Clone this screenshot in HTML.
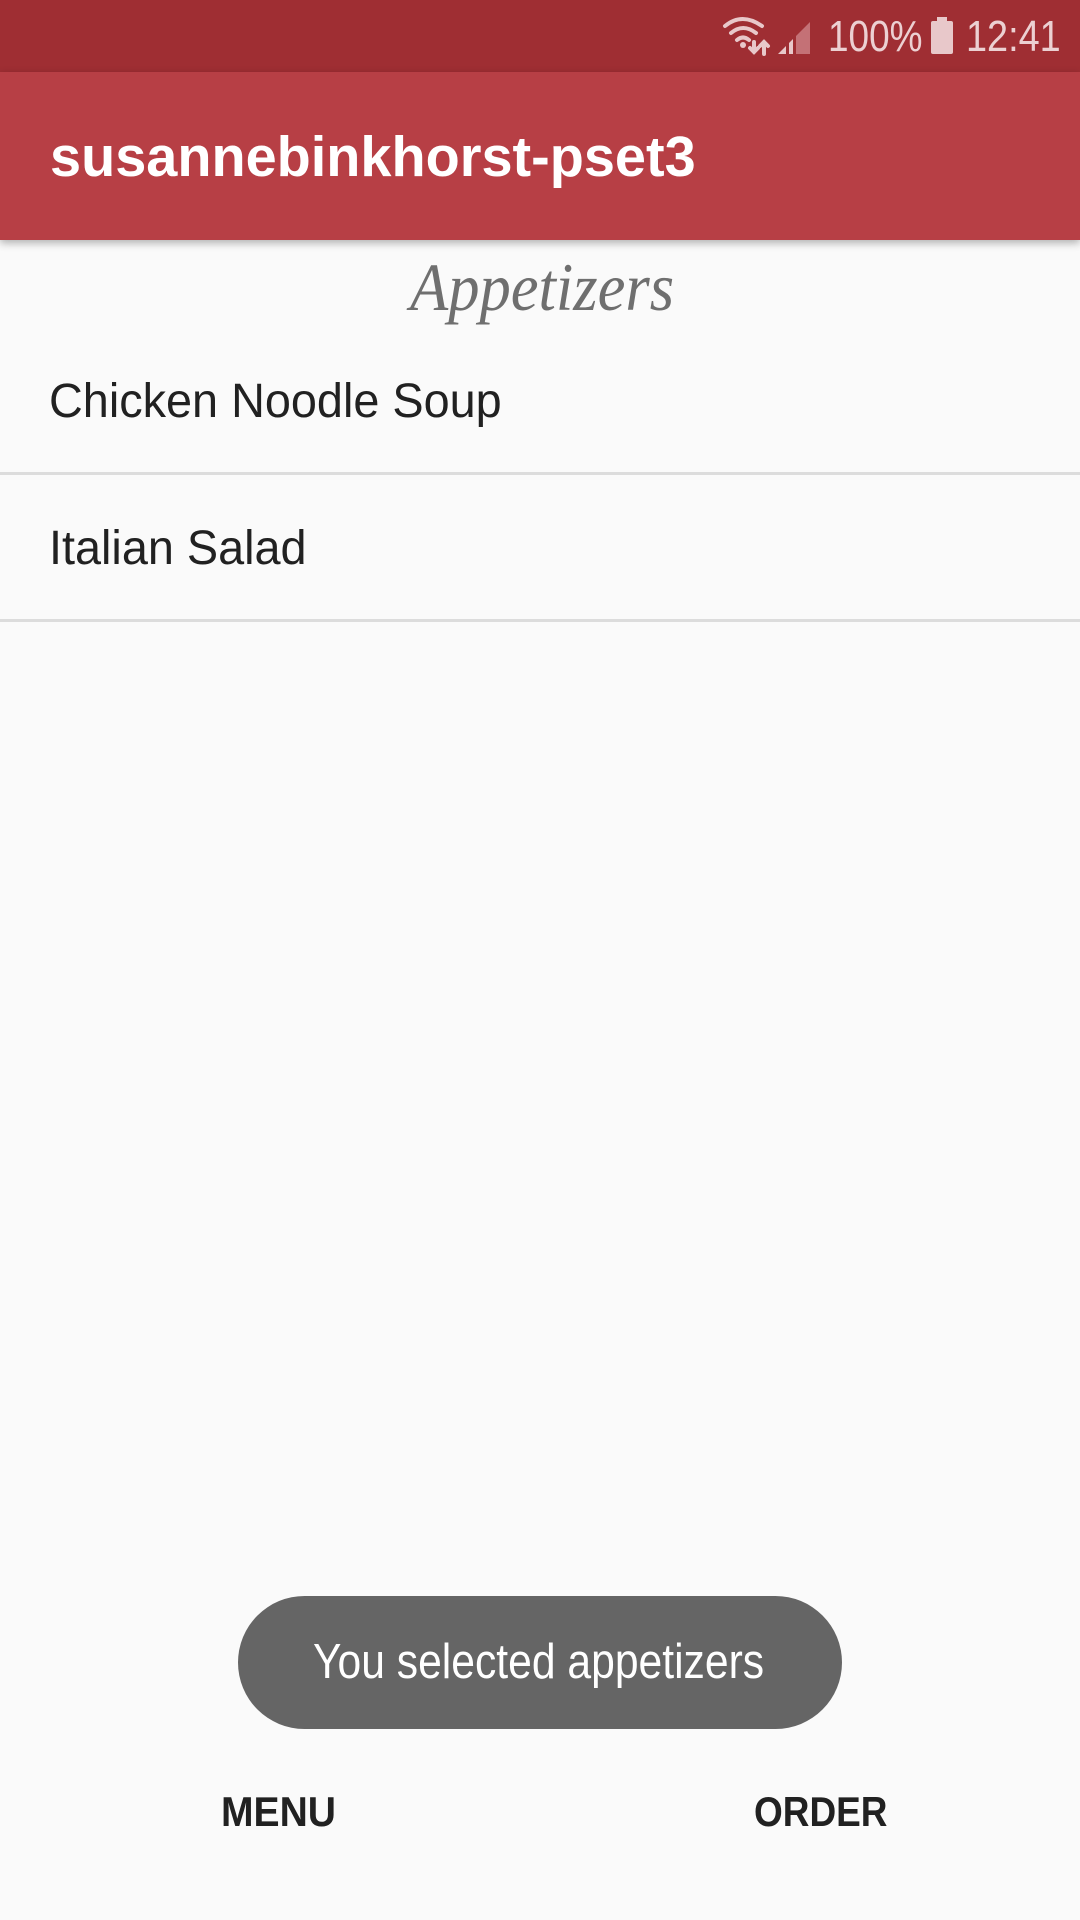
<!DOCTYPE html>
<html><head><meta charset="utf-8"><style>
*{margin:0;padding:0;box-sizing:border-box}
body{width:1080px;height:1920px;background:#fafafa;position:relative;overflow:hidden;font-family:"Liberation Sans",sans-serif}
.sb{position:absolute;left:0;top:0;width:1080px;height:72px;background:#9f2e33}
.ab{position:absolute;left:0;top:72px;width:1080px;height:168px;background:#b73f45;box-shadow:0 3px 8px rgba(0,0,0,.3)}
.t{position:absolute;white-space:nowrap;transform-origin:0 0}
.div{position:absolute;left:0;width:1080px;height:3px;background:#dcdcdc}
</style></head><body>
<div class="sb">
<svg style="position:absolute;left:722px;top:16px" width="90" height="40" viewBox="0 0 90 40">
<g fill="none" stroke="#e8c8ca" stroke-width="4" stroke-linecap="round">
<path d="M3 10 Q20 -4 40 10"/><path d="M9 17 Q21 7 34 17"/><path d="M15 24 Q21 19 27 24"/>
<path d="M32 26 v10 M28 32 l4 4 4-4"/><path d="M42 38 v-12 M38 30 l4-4 4 4"/></g>
<circle cx="21" cy="29" r="3" fill="#e8c8ca"/>
<path d="M56 38 L64 38 L64 30 Z" fill="#e8c8ca"/><path d="M67 38 L67 27 L71 23 L71 38 Z" fill="#e8c8ca"/>
<path d="M74 38 L74 20 L88 6 L88 38 Z" fill="#c47176"/>
</svg>
<div class="t" style="left:828px;top:12px;font-size:44px;color:#ecd0d2;transform:scaleX(0.84)">100%</div>
<div style="position:absolute;left:931px;top:21px;width:22px;height:33px;background:#e8c8ca;border-radius:2px"></div>
<div style="position:absolute;left:937px;top:17px;width:10px;height:5px;background:#e8c8ca"></div>
<div class="t" style="left:966px;top:12px;font-size:44px;color:#ecd0d2;transform:scaleX(0.86)">12:41</div>
</div>
<div class="ab"><div class="t" style="left:50px;top:52px;font-size:57px;color:#fff;font-weight:bold;transform:scaleX(0.98)">susannebinkhorst-pset3</div></div>
<div class="t" style="left:410px;top:248px;font-size:68px;color:#6f6f6f;font-family:'Liberation Serif',serif;font-style:italic;transform:scaleX(0.92)">Appetizers</div>
<div class="t" style="left:49px;top:374px;font-size:48px;color:#212121;transform:scaleX(0.975)">Chicken Noodle Soup</div>
<div class="div" style="top:472px"></div>
<div class="t" style="left:49px;top:521px;font-size:48px;color:#212121;transform:scaleX(0.975)">Italian Salad</div>
<div class="div" style="top:619px"></div>
<div style="position:absolute;left:238px;top:1596px;width:604px;height:133px;background:#656565;border-radius:67px"></div>
<div class="t" style="left:313px;top:1634px;font-size:49px;color:#fff;transform:scaleX(0.87)">You selected appetizers</div>
<div class="t" style="left:221px;top:1788px;font-size:42px;color:#212121;font-weight:bold;transform:scaleX(0.93)">MENU</div>
<div class="t" style="left:754px;top:1788px;font-size:42px;color:#212121;font-weight:bold;transform:scaleX(0.88)">ORDER</div>
</body></html>
